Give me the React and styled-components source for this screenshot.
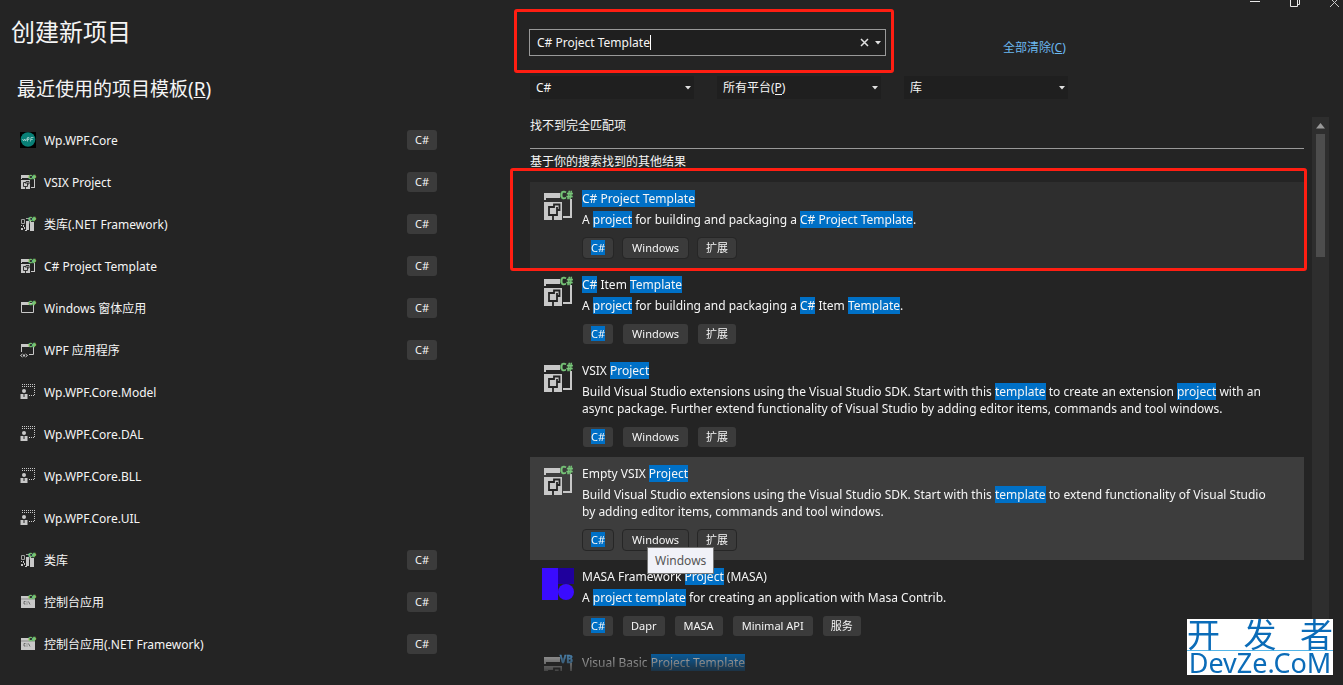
import React from 'react';
import styled, { createGlobalStyle, css } from 'styled-components';

const UI_FONT = '"Noto Sans", "Noto Sans CJK SC", sans-serif';
const BACKGROUND = '#242424';
const FIELD = '#1f1f1f';
const TEXT = '#f5f5f5';
const GLYPH = '#c8c8c8';
const CHIP = '#3b3b3b';
const MATCH = '#0070c6';
const MARKER = '#ff1e12';
const LINK = '#6cb8f0';

const GlobalStyle = createGlobalStyle`
  * {
    box-sizing: border-box;
  }

  body {
    margin: 0;
    background: ${BACKGROUND};
    color: ${TEXT};
    font-family: ${UI_FONT};
    font-size: 12px;
    line-height: 17px;
  }

  button, input, select {
    font: inherit;
    color: inherit;
  }

  svg {
    overflow: visible;
  }
`;

const Page = styled.main`
  position: relative;
  display: grid;
  grid-template-columns: minmax(0, 437px) minmax(0, 1fr);
  column-gap: 92px;
  height: 100vh;
  overflow: hidden;
`;

/* ---------- window buttons ---------- */

const WindowControls = styled.div`
  position: absolute;
  top: 0;
  right: 0;
  display: flex;
  gap: 26px;
`;

const WindowButton = styled.button`
  display: flex;
  padding: 0;
  border: 0;
  background: none;
`;

/* ---------- recent templates ---------- */

const Recent = styled.section`
  padding-top: 16px;
`;

const Title = styled.h1`
  margin: 0 0 28px 11px;
  font-size: 24px;
  line-height: 32px;
  font-weight: 400;
`;

const RecentHeading = styled.h2`
  margin: 0 0 17px 17px;
  font-size: 19px;
  line-height: 26px;
  font-weight: 400;
`;

const RecentList = styled.ul`
  margin: 0;
  padding: 0;
  list-style: none;
`;

const RecentRow = styled.li`
  display: flex;
  align-items: center;
  gap: 8px;
  height: 42px;
  padding-left: 20px;
`;

const RecentName = styled.span`
  flex: 1;
`;

const Language = styled.span`
  width: 30px;
  border-radius: 3px;
  background: ${CHIP};
  font-size: 11px;
  line-height: 20px;
  text-align: center;
`;

/* ---------- search and filters ---------- */

const Browser = styled.section`
  display: flex;
  flex-direction: column;
  min-height: 0;
  padding: 29px 14px 10px 0;
`;

const marker = css`
  position: absolute;
  border: 3px solid ${MARKER};
  border-radius: 3px;
  pointer-events: none;
`;

const SearchRow = styled.div`
  display: flex;
  align-items: flex-end;
  gap: 117px;
`;

const SearchBox = styled.div`
  position: relative;
  display: flex;
  align-items: center;
  flex: 0 1 357px;
  height: 27px;
  padding-left: 7px;
  border: 1px solid #999;
  background: ${FIELD};

  &::after {
    ${marker}
    content: '';
    inset: -21px -9px -18px -16px;
  }
`;

const SearchInput = styled.input`
  field-sizing: content;
  padding: 0;
  border: 0;
  outline: 0;
  background: none;
`;

const Caret = styled.span`
  width: 1px;
  height: 15px;
  margin-right: auto;
  background: #fff;
`;

const IconButton = styled.button`
  display: flex;
  align-items: center;
  justify-content: center;
  width: 14px;
  height: 20px;
  padding: 0;
  border: 0;
  background: none;
`;

const ClearAll = styled.a`
  color: ${LINK};
  text-decoration: none;
  white-space: nowrap;
`;

const Filters = styled.div`
  display: flex;
  gap: 23px;
  margin: 20px 0 0 1px;
`;

const FilterBox = styled.label`
  position: relative;
  display: flex;
  align-items: center;
  flex: 0 1 164px;
  background: ${FIELD};

  svg {
    position: absolute;
    right: 3px;
  }
`;

const FilterSelect = styled.select`
  width: 100%;
  height: 23px;
  padding: 0 16px 0 6px;
  border: 0;
  outline: 0;
  appearance: none;
  background: none;
`;

/* line under the P access key */
const AccessLine = styled.span`
  position: absolute;
  left: 58px;
  bottom: 4px;
  width: 7px;
  height: 1px;
  background: ${TEXT};
`;

/* ---------- results ---------- */

const ResultArea = styled.div`
  position: relative;
  display: flex;
  gap: 8px;
  flex: 1;
  min-height: 0;
  margin: 18px 0 0 1px;
`;

const Results = styled.div`
  display: flex;
  flex-direction: column;
  flex: 1;
  min-width: 0;
  padding-bottom: 4px;
`;

const NoMatch = styled.p`
  margin: 0;
  padding-bottom: 14px;
  border-bottom: 1px solid #999;
`;

const OtherHeading = styled.p`
  margin: 4px 0 12px;
`;

const ResultList = styled.ul`
  flex: 1;
  min-height: 0;
  margin: 0;
  padding: 0;
  overflow: hidden;
  list-style: none;
  mask-image: linear-gradient(to bottom, #000 calc(100% - 26px), rgba(0, 0, 0, 0.2));
`;

const ResultMarker = styled.div`
  ${marker}
  top: 51px;
  left: -20px;
  right: 22px;
  height: 103px;
`;

const Result = styled.li`
  display: flex;
  gap: 8px;
  padding: 8px 32px 9px 12px;
  background: ${({ $state }) =>
    ({ selected: '#2e2e2e', hover: '#3d3d3d' })[$state] || 'transparent'};

  > svg {
    flex: none;
  }
`;

const ResultName = styled.h3`
  margin: 0 0 4px;
  font-size: 12px;
  font-weight: 400;
`;

const Description = styled.p`
  margin: 0;
`;

const Match = styled.mark`
  background: ${MATCH};
  color: inherit;
`;

const Chips = styled.div`
  display: flex;
  gap: 8px;
  margin-top: 9px;
`;

const Chip = styled.span`
  position: relative;
  min-width: 32px;
  padding: 0 ${({ $short }) => ($short ? 8 : 9)}px;
  border: 1px solid ${({ $framed }) => ($framed ? '#262626' : 'transparent')};
  border-radius: 4px;
  background: ${CHIP} padding-box;
  font-size: 11px;
  line-height: 20px;
  text-align: center;
`;

const Tooltip = styled.span`
  position: absolute;
  z-index: 2;
  top: 17px;
  left: 24px;
  padding: 4px 7px;
  border: 1px solid #777;
  background: #f1f2f8;
  color: #555;
  font-size: 12px;
  line-height: 17px;
`;

const Scrollbar = styled.div`
  flex: 0 0 17px;
  display: flex;
  flex-direction: column;
  align-items: center;
  gap: 5px;
  padding-top: 6px;
  background: #2e2e2e;
`;

const Thumb = styled.div`
  width: 9px;
  height: 123px;
  background: #4d4d4d;
`;

/* ---------- site badge ---------- */

const SiteBadge = styled.div`
  position: absolute;
  right: 10px;
  bottom: 10px;
  width: 146px;
  background: #fff;
  color: #0b6cb8;
`;

const SiteName = styled.div`
  display: flex;
  justify-content: space-between;
  border-bottom: 1px solid #53b5e8;
  font-size: 33px;
  line-height: 31px;
`;

const SiteAddress = styled.div`
  font-size: 27px;
  line-height: 24px;
  text-align: center;
`;

/* ---------- drawings ---------- */

const Arrow = () => (
  <svg width="6" height="4" viewBox="0 0 6 4" aria-hidden="true">
    <path d="M0 0h6L3 3.5z" fill="#e0e0e0" />
  </svg>
);

const Tag = ({ small, label = 'C#', color = '#78c679' }) => (
  <text
    x={small ? 16 : 31}
    y={small ? 5 : 9}
    textAnchor="end"
    fill={color}
    stroke={color}
    strokeWidth=".4"
    fontFamily="Noto Sans, sans-serif"
    fontSize={small ? 6 : 10}
    fontWeight="700"
  >
    {label}
  </text>
);

const ExtensionIcon = ({ label, color }) => (
  <svg width="32" height="32" viewBox="0 0 32 32" aria-hidden="true">
    <path d="M2 3h16v5H4v2H2z" fill={GLYPH} />
    <path d="M28 9h2v19h-9v-2h7z" fill={GLYPH} />
    <path d="M2 12h18v18H2z" fill={GLYPH} />
    <path
      d="M12 17H7v8h8v-8M12 20v-5.500h5.500V20H15M11 25v5"
      fill="none"
      stroke={BACKGROUND}
      strokeWidth="1.800"
    />
    <path d="M8 18h6v6H8z" fill={GLYPH} />
    <Tag label={label} color={color} />
  </svg>
);

const MasaIcon = () => (
  <svg width="32" height="32" viewBox="0 0 32 32" aria-hidden="true">
    <path d="M0 0h16v32H0z" fill="#3a0bff" />
    <path d="M16 0h16v16H16z" fill="#1f009c" />
    <circle cx="24" cy="24" r="8" fill="#3a0bff" />
  </svg>
);

const smallIcons = {
  app: (
    <>
      <path d="M0 0h16v16H0z" fill="#000" />
      <circle cx="8" cy="7.500" r="7.300" fill="#087f76" />
      <path
        d="M2.500 7l1.200 2 1-2 1 2 1-2.500M7.500 9.500v-4h1.500v2H7.500M10.500 9.500l.5-4h2.500M10.800 7.500h2"
        fill="none"
        stroke="#a9d3cf"
        strokeWidth=".8"
      />
    </>
  ),
  vsix: (
    <>
      <path d="M1 1h8v3H2v1H1zM14 5h1v9h-4v-1h3zM1 6h9v9H1z" fill={GLYPH} />
      <path
        d="M6 8.500H3.500v4h4v-4M6 10V7.500h3V10H7.500M5.500 12.500V15"
        fill="none"
        stroke={BACKGROUND}
        strokeWidth=".9"
      />
      <Tag small />
    </>
  ),
  library: (
    <>
      <path d="M1.500 3.500h3v4h-3zM6 2.500h4v5" fill="none" stroke="#a0a0a0" />
      <path d="M6 5h3v9H6zM10 4h1v11h-1zM11 6h3v9h-3z" fill={GLYPH} />
      <path
        d="M1 9h1v1H1zM3 9h1v2H3zM1 12h2v2H1zM4 11h1v2H4zM5 14h2v1H5z"
        fill={GLYPH}
      />
      <Tag small />
    </>
  ),
  window: (
    <>
      <path d="M1.500 3.500h12v9h-12z" fill="none" stroke={GLYPH} />
      <path d="M1 2h8v3H1z" fill={GLYPH} />
      <Tag small />
    </>
  ),
  wpf: (
    <>
      <path d="M1.500 10V4.500M13.500 5v7.500H9" fill="none" stroke={GLYPH} />
      <path d="M1 2h8v3H1z" fill={GLYPH} />
      <path d="M2.500 12l-2 1.500 2 1.500M5.500 12l2 1.500-2 1.500" fill="none" stroke={GLYPH} />
      <path d="M3 12.500h2v2H3z" fill={GLYPH} />
      <Tag small />
    </>
  ),
  custom: (
    <>
      <path
        d="M2 .5h13M2 2.500h13M14.500 4v8M9 11.500h5"
        fill="none"
        stroke={GLYPH}
        strokeDasharray="1 1"
      />
      <circle cx="4" cy="7" r="2" fill={GLYPH} />
      <path d="M.5 10h7v5h-7z" fill={GLYPH} />
      <path d="M3.500 10h1v3h-1z" fill={BACKGROUND} />
    </>
  ),
  console: (
    <>
      <path d="M1 2h14v12H1z" fill={GLYPH} />
      <path d="M1 5h14" stroke="#8c8c8c" />
      <path
        d="M5.500 7.500H4V10h1.500M7 7.500v1M7 9.500v1M8.500 7.500l1.500 3"
        fill="none"
        stroke="#555"
        strokeWidth=".8"
      />
      <path d="M9 0h7v4.500H9z" fill={BACKGROUND} />
      <Tag small />
    </>
  ),
};

const SmallIcon = ({ kind }) => (
  <svg width="16" height="16" viewBox="0 0 16 16" aria-hidden="true">
    {smallIcons[kind]}
  </svg>
);

/* ---------- data ---------- */

const recent = [
  { name: 'Wp.WPF.Core', icon: 'app', language: 'C#' },
  { name: 'VSIX Project', icon: 'vsix', language: 'C#' },
  { name: '类库(.NET Framework)', icon: 'library', language: 'C#' },
  { name: 'C# Project Template', icon: 'vsix', language: 'C#' },
  { name: 'Windows 窗体应用', icon: 'window', language: 'C#' },
  { name: 'WPF 应用程序', icon: 'wpf', language: 'C#' },
  { name: 'Wp.WPF.Core.Model', icon: 'custom' },
  { name: 'Wp.WPF.Core.DAL', icon: 'custom' },
  { name: 'Wp.WPF.Core.BLL', icon: 'custom' },
  { name: 'Wp.WPF.Core.UIL', icon: 'custom' },
  { name: '类库', icon: 'library', language: 'C#' },
  { name: '控制台应用', icon: 'console', language: 'C#' },
  { name: '控制台应用(.NET Framework)', icon: 'console', language: 'C#' },
];

// Square brackets mark the parts that match the search.
const results = [
  {
    name: '[C# Project Template]',
    text: 'A [project] for building and packaging a [C# Project Template].',
    chips: ['[C#]', 'Windows', '扩展'],
    state: 'selected',
  },
  {
    name: '[C#] Item [Template]',
    text: 'A [project] for building and packaging a [C#] Item [Template].',
    chips: ['[C#]', 'Windows', '扩展'],
  },
  {
    name: 'VSIX [Project]',
    text:
      'Build Visual Studio extensions using the Visual Studio SDK. Start with this [template] to create an extension [project] with an async package. Further extend functionality of Visual Studio by adding editor items, commands and tool windows.',
    chips: ['[C#]', 'Windows', '扩展'],
  },
  {
    name: 'Empty VSIX [Project]',
    text:
      'Build Visual Studio extensions using the Visual Studio SDK. Start with this [template] to extend functionality of Visual Studio by adding editor items, commands and tool windows.',
    chips: ['[C#]', 'Windows', '扩展'],
    state: 'hover',
    tooltip: 'Windows',
  },
  {
    name: 'MASA Framework [Project] (MASA)',
    text: 'A [project template] for creating an application with Masa Contrib.',
    chips: ['[C#]', 'Dapr', 'MASA', 'Minimal API', '服务'],
    icon: <MasaIcon />,
  },
  {
    name: 'Visual Basic [Project Template]',
    text: '',
    chips: [],
    icon: <ExtensionIcon label="VB" color="#5aa9e6" />,
  },
];

const highlight = (text) =>
  text
    .split(/(\[[^\]]+\])/)
    .map((part, i) =>
      part[0] === '[' ? <Match key={i}>{part.slice(1, -1)}</Match> : part
    );

const App = () => (
  <>
    <GlobalStyle />
    <Page>
      <Recent>
        <Title>创建新项目</Title>
        <RecentHeading>
          最近使用的项目模板(<u>R</u>)
        </RecentHeading>
        <RecentList>
          {recent.map(({ name, icon, language }) => (
            <RecentRow key={name}>
              <SmallIcon kind={icon} />
              <RecentName>{name}</RecentName>
              {language && <Language>{language}</Language>}
            </RecentRow>
          ))}
        </RecentList>
      </Recent>

      <Browser>
        <SearchRow>
          <SearchBox>
            <SearchInput
              type="text"
              aria-label="搜索模板"
              defaultValue="C# Project Template"
            />
            <Caret />
            <IconButton type="button" aria-label="清除">
              <svg width="9" height="9" viewBox="0 0 9 9">
                <path d="M1 1l7 7M8 1L1 8" stroke="#e0e0e0" strokeWidth="1.500" />
              </svg>
            </IconButton>
            <IconButton type="button" aria-label="搜索历史">
              <Arrow />
            </IconButton>
          </SearchBox>
          <ClearAll href="#clear">
            全部清除(<u>C</u>)
          </ClearAll>
        </SearchRow>

        <Filters>
          <FilterBox>
            <FilterSelect aria-label="语言">
              <option>C#</option>
            </FilterSelect>
            <Arrow />
          </FilterBox>
          <FilterBox>
            <FilterSelect aria-label="平台">
              <option>所有平台(P)</option>
            </FilterSelect>
            <AccessLine />
            <Arrow />
          </FilterBox>
          <FilterBox>
            <FilterSelect aria-label="项目类型">
              <option>库</option>
            </FilterSelect>
            <Arrow />
          </FilterBox>
        </Filters>

        <ResultArea>
          <Results>
            <NoMatch>找不到完全匹配项</NoMatch>
            <OtherHeading>基于你的搜索找到的其他结果</OtherHeading>
            <ResultList>
              {results.map(({ name, text, chips, icon, state, tooltip }) => (
                <Result key={name} $state={state}>
                  {icon || <ExtensionIcon />}
                  <div>
                    <ResultName>{highlight(name)}</ResultName>
                    <Description>{highlight(text)}</Description>
                    <Chips>
                      {chips.map((chip) => (
                        <Chip
                          key={chip}
                          $framed={Boolean(state)}
                          $short={chip.length < 5 && chip !== 'MASA'}
                        >
                          {highlight(chip)}
                          {tooltip === chip && (
                            <Tooltip role="tooltip">{tooltip}</Tooltip>
                          )}
                        </Chip>
                      ))}
                    </Chips>
                  </div>
                </Result>
              ))}
            </ResultList>
          </Results>
          <Scrollbar>
            <svg width="9" height="6" viewBox="0 0 9 6" aria-hidden="true">
              <path d="M0 5.500h9L4.500 0z" fill="#999" />
            </svg>
            <Thumb />
          </Scrollbar>
          <ResultMarker />
        </ResultArea>
      </Browser>

      <WindowControls>
        <WindowButton type="button" aria-label="最小化">
          <svg width="14" height="8" viewBox="0 0 14 8">
            <path d="M1 1.500h10" stroke="#e8e8e8" />
          </svg>
        </WindowButton>
        <WindowButton type="button" aria-label="还原">
          <svg width="14" height="8" viewBox="0 0 14 8">
            <path d="M1.500 0v6.500h7V0M8 4.500h2.500V0" fill="none" stroke="#e8e8e8" />
          </svg>
        </WindowButton>
        <WindowButton type="button" aria-label="关闭">
          <svg width="14" height="8" viewBox="0 0 14 8">
            <path d="M1 7L8 0M10 7L3 0" stroke="#c8c8c8" />
          </svg>
        </WindowButton>
      </WindowControls>

      <SiteBadge>
        <SiteName>
          <span>开</span>
          <span>发</span>
          <span>者</span>
        </SiteName>
        <SiteAddress>DevZe.CoM</SiteAddress>
      </SiteBadge>
    </Page>
  </>
);

export default App;
